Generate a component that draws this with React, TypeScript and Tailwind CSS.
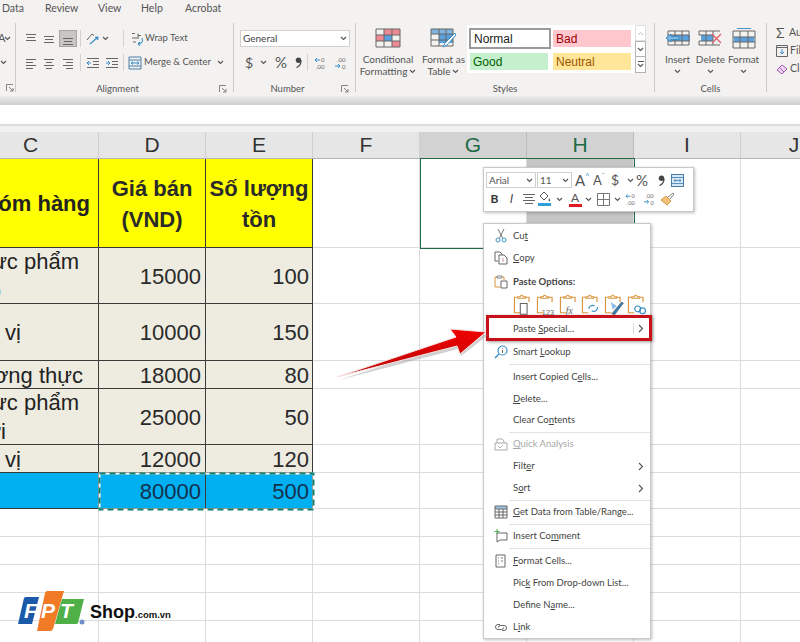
import React from 'react'

const ui = "font-['Lato',sans-serif]"
const sheet = "font-['Liberation_Sans',Arial,sans-serif]"

const Chev = ({ className = 'mx-auto' }: { className?: string }) => (
  <svg width="7" height="5" viewBox="0 0 7 5" fill="none" className={className}>
    <path d="M1 1l2.5 2.5L6 1" stroke="#555" strokeWidth="1.1" />
  </svg>
)

const Lines = ({ rows }: { rows: [number, number, number][] }) => (
  <svg width="14" height="14" viewBox="0 0 14 14" fill="none" stroke="#666" strokeWidth="1">
    {rows.map(([y, a, b]) => (
      <path key={y} d={`M${a} ${y}.5H${b}`} />
    ))}
  </svg>
)

const Launcher = () => (
  <svg width="8" height="8" viewBox="0 0 8 8" fill="none" stroke="#777" strokeWidth="0.9">
    <path d="M0.5 7V0.5H7M3 3l4 4M7 4v3H4" />
  </svg>
)

const Comma = ({ className = '' }: { className?: string }) => (
  <svg width="7" height="11" viewBox="0 0 7 11" fill="none" className={className}>
    <circle cx="3.5" cy="3.2" r="2.7" fill="#444" />
    <path d="M6 3.5C6 7 4 9.5 1.5 10.5" stroke="#444" strokeWidth="1.3" />
  </svg>
)

const DecLeft = () => (
  <svg width="14" height="14" viewBox="0 0 14 14" fill="none">
    <path d="M6 4H1m2-2L1 4l2 2" stroke="#3a8fc7" />
    <text x="7" y="6" fontSize="6" fill="#666">0</text>
    <text x="2" y="13" fontSize="6" fill="#666">.00</text>
  </svg>
)

const DecRight = () => (
  <svg width="14" height="14" viewBox="0 0 14 14" fill="none">
    <text x="3" y="6" fontSize="6" fill="#666">.00</text>
    <path d="M1 10h5M4 8l2 2-2 2" stroke="#3a8fc7" />
    <text x="8" y="13" fontSize="6" fill="#666">0</text>
  </svg>
)

const VSep = () => <div className="w-px h-[69px] bg-[#cdcbc9] shrink-0" />
const Thin = ({ h = 'h-[17px]' }: { h?: string }) => <div className={`w-px ${h} bg-[#d4d2d0] shrink-0`} />
const Box = ({ children, className = 'w-[18px]' }: { children?: React.ReactNode; className?: string }) => (
  <div className={`flex items-center justify-center h-[17px] shrink-0 ${className}`}>{children}</div>
)

const GroupLabel = ({ children, launcher }: { children?: React.ReactNode; launcher?: boolean }) => (
  <div className="flex items-center h-[12px] mt-auto mb-[1px]">
    <span className={`flex-1 text-center text-[9.5px] leading-[12px] text-[#555] ${ui}`}>{children}</span>
    {launcher && (
      <span className="w-[14px] flex">
        <Launcher />
      </span>
    )}
  </div>
)

const TableGrid = ({ fill }: { fill?: React.ReactNode }) => (
  <svg width="26" height="20" viewBox="0 0 26 20" fill="none">
    {fill}
    <path d="M1 1h24v18H1zM1 7h24M1 13h24M9 1v18M17 1v18" stroke="#666" strokeWidth="1" />
  </svg>
)

const FormatRibbonIcon = ({ top }: { top?: boolean }) => (
  <svg width="24" height="21" viewBox="0 0 24 21" fill="none">
    {top && <path d="M5 0.5h14" stroke="#4a90c8" strokeWidth="1" />}
    <rect x="2" y="9" width="20" height="5" fill="#5aa0dc" />
    <path d="M1 3h22v17H1zM1 9h22M1 14h22M8 3v17M16 3v17" stroke="#666" strokeWidth="1" />
  </svg>
)

const CmdColumn = ({ icon, lines, chev }: { icon: React.ReactNode; lines: React.ReactNode[]; chev?: boolean }) => (
  <div className={`flex flex-col items-center pt-[5px] text-[10px] leading-[12px] text-[#555] ${ui}`}>
    <div className="h-[20px] flex items-center justify-center">{icon}</div>
    <div className="mt-[5px] whitespace-nowrap text-center">{lines[0]}</div>
    {lines[1] ? (
      <div className="whitespace-nowrap flex items-center gap-[2px]">
        {lines[1]}
        <Chev className="" />
      </div>
    ) : (
      <div className="h-[12px] flex items-center">{chev && <Chev />}</div>
    )}
  </div>
)

const Ribbon = () => (
  <div className="h-[96px] bg-[#f3f2f1] flex flex-col shrink-0">
    <div className={`h-[18px] mb-[5px] flex items-center text-[10.5px] text-[#555] pl-[2px] ${ui}`}>
      <span className="w-[43px]">Data</span>
      <span className="w-[53px]">Review</span>
      <span className="w-[43px]">View</span>
      <span className="w-[44px]">Help</span>
      <span>Acrobat</span>
    </div>
    <div className="flex h-[73px] w-[800px] overflow-hidden">
      {/* font group, cut off at the left */}
      <div className="w-[15px] flex flex-col shrink-0 overflow-hidden">
        <div className={`h-[17px] mt-[7px] flex items-center text-[11px] text-[#555] -ml-[2px] ${ui}`}>
          A<Chev className="-ml-[1px]" />
        </div>
        <div className="h-[17px] mt-[7px] flex items-center">
          <Chev className="" />
        </div>
        <div className="mt-auto mb-[4px] ml-[6px]">
          <Launcher />
        </div>
      </div>
      <VSep />
      {/* Alignment */}
      <div className="w-[217px] flex flex-col shrink-0">
        <div className="flex items-center mt-[7px] pl-[6px]">
          <Box>
            <Lines rows={[[2, 2, 12], [5, 3, 11], [8, 2, 12]]} />
          </Box>
          <Box>
            <Lines rows={[[4, 2, 12], [7, 3, 11], [10, 2, 12]]} />
          </Box>
          <Box className="w-[18px] ml-px bg-[#c8c6c4] border border-[#a8a6a4]">
            <Lines rows={[[6, 2, 12], [9, 3, 11], [12, 2, 12]]} />
          </Box>
          <div className="w-[3px]" />
          <Thin />
          <Box className="w-[17px] ml-[3px]">
            <svg width="14" height="14" viewBox="0 0 14 14" fill="none">
              <path d="M1 8l5-6 2 1.5" stroke="#666" />
              <path d="M4 12l8-7M12 5l-3 .5M12 5l-.5 3" stroke="#3a8fc7" strokeWidth="1.2" />
            </svg>
          </Box>
          <Box className="w-[8px]">
            <Chev />
          </Box>
          <div className="w-[14px]" />
          <Thin />
          <Box className="w-[13px] ml-[7px]">
            <svg width="13" height="14" viewBox="0 0 13 14" fill="none">
              <path d="M1 6h7M2 10h3" stroke="#666" />
              <path d="M1 1.5h3M7 1.5v4M7 3.5h3" stroke="#666" />
              <path d="M11 6c1.5 4-1 6-4 6m0 0l2-2m-2 2l2 1.5" stroke="#3a8fc7" strokeWidth="1.1" />
            </svg>
          </Box>
          <span className={`ml-px text-[9.5px] text-[#555] whitespace-nowrap ${ui}`}>Wrap Text</span>
        </div>
        <div className="flex items-center mt-[7px] pl-[6px]">
          <Box>
            <Lines rows={[[3, 2, 12], [6, 2, 9], [9, 2, 12], [12, 2, 9]]} />
          </Box>
          <Box>
            <Lines rows={[[3, 2, 12], [6, 4, 10], [9, 2, 12], [12, 4, 10]]} />
          </Box>
          <Box className="w-[18px] ml-px">
            <Lines rows={[[3, 2, 12], [6, 5, 12], [9, 2, 12], [12, 5, 12]]} />
          </Box>
          <div className="w-[3px]" />
          <Thin />
          <Box className="w-[17px] ml-[3px]">
            <svg width="14" height="14" viewBox="0 0 14 14" fill="none">
              <path d="M1 2.5h12M7 5.5h6M7 8.5h6M1 11.5h12" stroke="#666" />
              <path d="M5 7H1m2-2L1 7l2 2" stroke="#3a8fc7" />
            </svg>
          </Box>
          <Box className="w-[17px] ml-[2px]">
            <svg width="14" height="14" viewBox="0 0 14 14" fill="none">
              <path d="M1 2.5h12M7 5.5h6M7 8.5h6M1 11.5h12" stroke="#666" />
              <path d="M1 7h4M3 5l2 2-2 2" stroke="#3a8fc7" />
            </svg>
          </Box>
          <div className="w-[3px]" />
          <Thin />
          <Box className="w-[14px] ml-[4px]">
            <svg width="14" height="14" viewBox="0 0 14 14" fill="none">
              <path d="M1 1h12v12H1zM1 4h12M1 10h12" stroke="#4a7ea8" />
              <path d="M3 7h8M3 7l2-1.5M3 7l2 1.5M11 7L9 5.5M11 7L9 8.5" stroke="#3a8fc7" />
            </svg>
          </Box>
          <span className={`ml-[2px] w-[72px] text-[9.5px] text-[#555] whitespace-nowrap ${ui}`}>Merge &amp; Center</span>
          <Chev className="ml-[1px]" />
        </div>
        <GroupLabel launcher>Alignment</GroupLabel>
      </div>
      <VSep />
      {/* Number */}
      <div className="w-[121px] flex flex-col shrink-0">
        <div className="ml-[6px] mt-[7px] w-[110px] h-[17px] bg-white border border-[#d2d0ce] flex items-center justify-between px-[2px]">
          <span className={`text-[10px] text-[#444] ${ui}`}>General</span>
          <Chev className="" />
        </div>
        <div className={`flex items-center mt-[7px] pl-[11px] h-[17px] text-[#555] ${ui}`}>
          <span className="w-[8px] text-[14px] leading-[17px]">$</span>
          <Chev className="ml-[7px]" />
          <span className="ml-[8px] text-[15px] leading-[17px] w-[17px]">%</span>
          <Comma className="ml-[3px] mr-[5px]" />
          <Thin />
          <Box className="w-[15px] ml-[5px]">
            <DecLeft />
          </Box>
          <Box className="w-[15px] ml-[5px]">
            <DecRight />
          </Box>
        </div>
        <GroupLabel launcher>Number</GroupLabel>
      </div>
      <VSep />
      {/* Styles */}
      <div className="w-[298px] flex flex-col shrink-0">
        <div className="flex h-[56px]">
          <div className="w-[64px] flex justify-center">
            <CmdColumn
              icon={
                <TableGrid
                  fill={
                    <>
                      <rect x="9" y="1" width="16" height="6" fill="#ef8a94" />
                      <rect x="1" y="7" width="8" height="6" fill="#ef8a94" />
                      <rect x="9" y="7" width="8" height="6" fill="#5aa0dc" />
                      <rect x="17" y="13" width="8" height="6" fill="#ef8a94" />
                    </>
                  }
                />
              }
              lines={['Conditional', 'Formatting']}
            />
          </div>
          <div className="w-[47px] flex justify-center">
            <CmdColumn
              icon={
                <svg width="26" height="21" viewBox="0 0 26 21" fill="none">
                  <rect x="1" y="1" width="22" height="5" fill="#7fb5e0" />
                  <rect x="9" y="6" width="14" height="9" fill="#5aa0dc" />
                  <path d="M1 1h22v17H1zM1 6h22M1 12h22M9 1v17M16 1v17" stroke="#666" />
                  <path d="M25 5L15 15l-2 4 4-2L26 7z" fill="#fff" stroke="#3a8fc7" />
                </svg>
              }
              lines={['Format as', 'Table']}
            />
          </div>
          <div className="mt-[2px] w-[179px] h-[48px] bg-white flex">
            <div className={`w-[168px] grid grid-cols-[83px_83px] grid-rows-[22px_22px] gap-y-[1px] pl-[2px] pt-[3px] text-[12px] leading-[16px] ${sheet}`}>
              <div className="w-[82px] h-[21px] border-2 border-[#9a9a9a] flex items-center px-[3px] text-[#222]">Normal</div>
              <div className="w-[78px] h-[17px] mt-[2px] ml-[1px] bg-[#ffc7ce] flex items-center px-[3px] text-[#9c0006]">Bad</div>
              <div className="w-[78px] h-[17px] mt-[2px] ml-[1px] bg-[#c6efce] flex items-center px-[3px] text-[#006100]">Good</div>
              <div className="w-[78px] h-[17px] mt-[2px] ml-[1px] bg-[#ffe699] flex items-center px-[3px] text-[#9c5700]">Neutral</div>
            </div>
            <div className="w-[11px] flex flex-col">
              <div className="h-[16px] border border-[#e1dfdd] flex items-center justify-center">
                <svg width="7" height="5" viewBox="0 0 7 5" fill="none">
                  <path d="M1 4l2.5-2.5L6 4" stroke="#bbb" />
                </svg>
              </div>
              <div className="h-[16px] border border-[#b5b3b1] flex items-center justify-center">
                <Chev className="" />
              </div>
              <div className="h-[16px] border border-[#b5b3b1] border-t-0 flex flex-col items-center justify-center">
                <div className="w-[6px] h-px bg-[#555]" />
                <Chev className="mt-[1px]" />
              </div>
            </div>
          </div>
        </div>
        <GroupLabel>Styles</GroupLabel>
      </div>
      <VSep />
      {/* Cells */}
      <div className="w-[111px] flex flex-col shrink-0">
        <div className="flex h-[56px] pl-[6px]">
          <div className="w-[33px] flex justify-center">
            <CmdColumn
              chev
              lines={['Insert']}
              icon={
                <svg width="26" height="18" viewBox="0 0 26 18" fill="none">
                  <rect x="3" y="6" width="22" height="6" fill="#5aa0dc" />
                  <path d="M3 2h21v14H3zM3 6h21M3 12h21M10 2v14M17 2v14" stroke="#666" />
                  <path d="M1 9l5-4v2.5h8v3H6V13z" fill="#7fb5e0" stroke="#3a8fc7" />
                </svg>
              }
            />
          </div>
          <div className="w-[33px] flex justify-center">
            <CmdColumn
              chev
              lines={['Delete']}
              icon={
                <svg width="25" height="18" viewBox="0 0 25 18" fill="none">
                  <rect x="3" y="6" width="12" height="6" fill="#5aa0dc" />
                  <path d="M1 2h21M1 16h21M8 2v14M15 2v14M1 6h13M1 12h13M1 2v4M1 12v4" stroke="#666" />
                  <path d="M14 5l9 9M23 5l-9 9" stroke="#e2606a" strokeWidth="1.4" />
                </svg>
              }
            />
          </div>
          <div className="w-[33px] flex justify-center">
            <CmdColumn chev lines={['Format']} icon={<FormatRibbonIcon top />} />
          </div>
        </div>
        <GroupLabel>Cells</GroupLabel>
      </div>
      <VSep />
      {/* Editing, cut off at the right */}
      <div className={`pl-[9px] pt-[1px] flex flex-col shrink-0 text-[10.5px] leading-[17px] text-[#555] whitespace-nowrap ${ui}`}>
        <div className="flex items-center h-[17px] gap-[2px]">
          <span className="text-[14px] w-[11px] leading-[17px]">Σ</span>AutoSum
        </div>
        <div className="flex items-center h-[17px] mt-[1px] gap-[2px]">
          <svg width="12" height="12" viewBox="0 0 12 12" fill="none">
            <path d="M0.5 0.5h11v11H0.5zM0.5 2.5h11" stroke="#666" />
            <path d="M6 4v5M4 7l2 2 2-2" stroke="#3a8fc7" />
          </svg>
          Fill
        </div>
        <div className="flex items-center h-[17px] mt-[1px] gap-[2px]">
          <svg width="12" height="12" viewBox="0 0 12 12" fill="none">
            <path d="M1 7l5-5 5 4-5 5z" fill="#efd8f2" stroke="#a855b5" />
            <path d="M3.5 4.5L8 9" stroke="#a855b5" />
          </svg>
          Clear
        </div>
      </div>
    </div>
  </div>
)

const cols = ['C', 'D', 'E', 'F', 'G', 'H', 'I', 'J']

const Line = ({ t, pr }: { t: string; pr: string }) => (
  <div className={`whitespace-nowrap leading-[29px] ${pr}`}>{t}</div>
)

const cText = [
  <div className="font-bold whitespace-nowrap pr-[8px]">Nhóm hàng</div>,
  <>
    <Line t="Thực phẩm" pr="pr-[19px]" />
    <Line t="khô" pr="pr-[97px]" />
  </>,
  <Line t="Gia vị" pr="pr-[77px]" />,
  <Line t="Lương thực" pr="pr-[15px]" />,
  <>
    <Line t="Thực phẩm" pr="pr-[19px]" />
    <Line t="tươi" pr="pr-[92px]" />
  </>,
  <Line t="Gia vị" pr="pr-[77px]" />,
  null
]

const nums: [string, string][] = [
  ['15000', '100'],
  ['10000', '150'],
  ['18000', '80'],
  ['25000', '50'],
  ['12000', '120'],
  ['80000', '500']
]

const Sheet = () => (
  <div className={`relative flex-1 ${sheet}`}>
    <div className="grid grid-cols-[99px_107px_107px_107px_107px_107px_107px_107px] h-[27px] w-[848px] bg-[#e6e6e6] border-b border-[#b5b5b5] text-[21px] leading-[26px] text-[#333]">
      {cols.map((c) => {
        const sel = c === 'G' || c === 'H'
        return (
          <div
            key={c}
            className={`text-center border-r ${sel ? 'bg-[#d2d2d2] text-[#1e6b45] border-[#bdbdbd]' : 'border-[#cfcfcf]'} ${c === 'C' ? 'pr-[37px]' : ''}`}
          >
            {c}
          </div>
        )
      })}
    </div>
    <div className="grid grid-cols-[99px_107px_107px_107px_107px_107px_107px_107px] grid-rows-[89px_56px_57px_28px_56px_28px_36px_28px_28px_28px_28px_28px] w-[848px] text-[22px] text-[#222]">
      {Array.from({ length: 12 }).map((_, r) => {
        const head = r === 0
        const table = r <= 6
        const blue = r === 6
        const bg = head ? 'bg-[#ffff00]' : blue ? 'bg-[#00b0f0]' : table ? 'bg-[#eeece1]' : 'bg-white'
        const line = table ? 'border-[#3a3a3a]' : 'border-[#dcdcdc]'
        const num = r >= 1 && r <= 6 ? nums[r - 1] : null
        const numColor = blue ? 'text-[#14304e]' : 'text-[#2a2a2a]'
        return (
          <React.Fragment key={r}>
            <div className={`${bg} border-r border-b ${line} overflow-hidden flex flex-col justify-center items-end pt-[1px]`}>
              {cText[r]}
            </div>
            <div className={`${bg} border-r border-b ${line} flex flex-col justify-center pt-[1px] ${head ? 'items-center font-bold leading-[31px]' : 'items-end pr-[4px]'} ${numColor}`}>
              {head ? (
                <>
                  <div>Giá bán</div>
                  <div>(VND)</div>
                </>
              ) : (
                num && num[0]
              )}
            </div>
            <div className={`${bg} border-r border-b ${line} flex flex-col justify-center pt-[1px] ${head ? 'items-center font-bold leading-[31px]' : 'items-end pr-[3px]'} ${numColor}`}>
              {head ? (
                <>
                  <div>Số lượng</div>
                  <div>tồn</div>
                </>
              ) : (
                num && num[1]
              )}
            </div>
            <div className="border-r border-b border-[#dcdcdc]" />
            <div className="border-r border-b border-[#dcdcdc]" />
            <div className={`border-r border-b border-[#dcdcdc] ${head ? 'bg-[#c6c6c6]' : ''}`} />
            <div className="border-r border-b border-[#dcdcdc]" />
            <div className="border-r border-b border-[#dcdcdc]" />
          </React.Fragment>
        )
      })}
    </div>

    {/* selection box over G:H */}
    <div className="absolute left-[420px] top-[26px] w-[215px] h-[91px] border-[1.5px] border-[#1e6b45]" />
    {/* copied range marching ants */}
    <svg className="absolute left-[98px] top-[340px]" width="217" height="39" viewBox="0 0 217 39" fill="none">
      <rect x="1.5" y="1.5" width="214" height="36" stroke="#fff" strokeWidth="2" />
      <rect x="1.5" y="1.5" width="214" height="36" stroke="#12806e" strokeWidth="2" strokeDasharray="6 4" />
    </svg>
  </div>
)

const Clip = ({ children }: { children?: React.ReactNode }) => (
  <svg width="24" height="22" viewBox="0 0 24 22" fill="none" className="-mr-[0.5px]">
    <path d="M5 3H1.5v16h6M13 3h3.5v5" stroke="#d9963f" strokeWidth="1.2" />
    <path d="M5 4V2.5h2.5a1.5 1.5 0 013 0H13V4z" stroke="#d9963f" strokeWidth="1.1" />
    {children}
  </svg>
)

const MiniToolbar = () => (
  <div className="absolute left-[483px] top-[167px] w-[211px] h-[45px] bg-white border border-[#c8c8c8] shadow-[1px_1px_3px_rgba(0,0,0,0.25)] flex flex-col text-[#555]">
    <div className={`flex items-center h-[16px] mt-[4px] ml-[2px] ${ui}`}>
      <div className="w-[50px] h-[16px] border border-[#cfcfcf] flex items-center justify-between px-[2px] text-[10px]">
        Arial
        <Chev className="" />
      </div>
      <div className="w-[35px] h-[16px] ml-px border border-[#cfcfcf] flex items-center justify-between px-[2px] text-[10px]">
        11
        <Chev className="" />
      </div>
      <span className="ml-[3px] text-[15px] leading-[16px] w-[18px] flex">
        A<span className="text-[7px] leading-[8px] text-[#3a8fc7]">^</span>
      </span>
      <span className="text-[13px] leading-[16px] w-[18px] flex">
        A<span className="text-[7px] leading-[8px] text-[#3a8fc7]">ˇ</span>
      </span>
      <span className="text-[14px] leading-[16px] w-[10px]">$</span>
      <Chev className="ml-[6px]" />
      <span className="ml-[2px] text-[15px] leading-[16px] w-[17px]">%</span>
      <Comma className="ml-[5px] mr-[6px]" />
      <svg width="13" height="13" viewBox="0 0 13 13" fill="none">
        <rect x="0.5" y="0.5" width="12" height="12" fill="#d6e6f3" stroke="#4a7ea8" />
        <path d="M0.5 3.5h12M0.5 9.5h12M3 6.5h7M3 6.5l1.5-1M3 6.5l1.5 1M10 6.5l-1.5-1M10 6.5l-1.5 1" stroke="#3a7fb0" strokeWidth="0.8" />
      </svg>
    </div>
    <div className={`flex items-center h-[18px] mt-[2px] ml-[2px] ${ui}`}>
      <span className="w-[17px] text-center font-bold text-[12px] text-[#333]">B</span>
      <span className={`w-[17px] text-center italic text-[12px] text-[#444] ${sheet}`}>I</span>
      <span className="w-[17px] flex justify-center">
        <Lines rows={[[2, 1, 13], [5, 3, 11], [8, 1, 13], [11, 3, 11]]} />
      </span>
      <svg width="14" height="16" viewBox="0 0 14 16" fill="none" className="ml-[1px]">
        <path d="M6 1l4 4-4 4-4-4z" stroke="#555" />
        <path d="M11 7c1 1.5 1.5 2 1 3-.5.5-1.5.5-1.5-.5z" fill="#555" />
        <rect x="0" y="12" width="13" height="3" fill="#2f9fd8" />
      </svg>
      <Chev className="ml-[4px]" />
      <span className="ml-[6px] w-[12px] flex flex-col items-center">
        <span className="text-[12px] leading-[12px] text-[#555]">A</span>
        <span className="w-[13px] h-[3px] bg-[#e01b24]" />
      </span>
      <Chev className="ml-[4px]" />
      <svg width="13" height="13" viewBox="0 0 13 13" fill="none" className="ml-[5px]">
        <path d="M0.5 0.5h12v12H0.5zM0.5 6.5h12M6.5 0.5v12" stroke="#777" />
      </svg>
      <Chev className="ml-[4px]" />
      <Box className="w-[13px] ml-[4px]">
        <DecLeft />
      </Box>
      <Box className="w-[13px] ml-[5px]">
        <DecRight />
      </Box>
      <svg width="15" height="14" viewBox="0 0 15 14" fill="none" className="ml-[4px]">
        <path d="M1 8l5-4 5 5-4 4z" fill="#f2c078" stroke="#d9963f" />
        <path d="M8 5l5-4 1 1-4 5" stroke="#888" />
      </svg>
    </div>
  </div>
)

const MenuRow = ({
  icon,
  children,
  arrow,
  disabled,
  bold
}: {
  icon?: React.ReactNode
  children: React.ReactNode
  arrow?: boolean
  disabled?: boolean
  bold?: boolean
}) => (
  <div className={`h-[22px] flex items-center ${disabled ? 'text-[#a8a8a8]' : 'text-[#444]'} ${bold ? 'font-bold' : ''}`}>
    <div className="w-[29px] flex justify-center pl-[4px]">{icon}</div>
    <div className="flex-1 whitespace-nowrap">{children}</div>
    {arrow && (
      <svg width="6" height="9" viewBox="0 0 6 9" fill="none" className="mr-[6px]">
        <path d="M1 1l3.5 3.5L1 8" stroke="#555" strokeWidth="1.1" />
      </svg>
    )}
  </div>
)

const MenuSep = ({ h = 'h-[2px]' }: { h?: string }) => (
  <div className={`${h} pl-[25px] flex items-center`}>
    <div className="h-px w-full bg-[#e2e2e2]" />
  </div>
)

const ContextMenu = () => (
  <div className={`absolute left-[483px] top-[223px] w-[168px] h-[416px] bg-white border border-[#c8c8c8] shadow-[1px_1px_3px_rgba(0,0,0,0.25)] flex flex-col pt-[1px] text-[9.5px] ${ui}`}>
    <MenuRow
      icon={
        <svg width="12" height="15" viewBox="0 0 12 15" fill="none">
          <path d="M3 1l4.5 9M9 1L4.5 10" stroke="#777" />
          <circle cx="3" cy="12" r="2" stroke="#3a8fc7" />
          <circle cx="9" cy="12" r="2" stroke="#3a8fc7" />
        </svg>
      }
    >
      Cu<u>t</u>
    </MenuRow>
    <MenuRow
      icon={
        <svg width="14" height="14" viewBox="0 0 14 14" fill="none">
          <path d="M1 1h5l2 2v1M1 1v9h3" stroke="#666" />
          <path d="M5 4h5l3 3v6H5z" stroke="#666" />
          <path d="M8 8h2M8 10h2" stroke="#c99" />
        </svg>
      }
    >
      <u>C</u>opy
    </MenuRow>
    <div className="h-[2px]" />
    <MenuRow
      bold
      icon={
        <svg width="14" height="14" viewBox="0 0 14 14" fill="none">
          <path d="M3 2H1v10h5M8 2h2v3" stroke="#d9963f" />
          <path d="M3 3V1h5v2z" stroke="#888" />
          <path d="M7 6h6v7H7z" stroke="#666" />
        </svg>
      }
    >
      Paste Options:
    </MenuRow>
    <div className="h-[25px] flex items-center pl-[29px]">
      <Clip>
        <path d="M9.5 9.5h5v11h-7v-11z" fill="#fff" stroke="#666" strokeWidth="1.1" />
      </Clip>
      <Clip>
        <text x="6" y="21" fontSize="7.5" fill="#666" fontFamily="'Liberation Sans',sans-serif">123</text>
      </Clip>
      <Clip>
        <text x="7" y="20" fontSize="10" fontStyle="italic" fill="#666" fontFamily="'Liberation Serif',serif">fx</text>
      </Clip>
      <Clip>
        <path d="M8 15a4 4 0 016-3m3 1a4 4 0 01-6 4" stroke="#3a8fc7" strokeWidth="1.2" />
      </Clip>
      <Clip>
        <path d="M7 8l6 4-4 4z" fill="#8fbde3" />
        <path d="M8 20l10-12 2 1-9 12z" fill="#3a7fb0" stroke="#555" strokeWidth="0.6" />
      </Clip>
      <Clip>
        <circle cx="11" cy="15" r="3" stroke="#3a8fc7" strokeWidth="1.2" />
        <circle cx="16" cy="17" r="3" stroke="#3a8fc7" strokeWidth="1.2" />
      </Clip>
    </div>
    <MenuRow arrow>
      <div className="flex items-center">
        <span className="flex-1">
          Paste <u>S</u>pecial...
        </span>
        <span className="w-px h-[11px] bg-[#ddd] mr-[4px]" />
      </div>
    </MenuRow>
    <div className="h-px" />
    <MenuRow
      icon={
        <svg width="14" height="14" viewBox="0 0 14 14" fill="none">
          <circle cx="8.5" cy="5.5" r="4.5" stroke="#3a8fc7" strokeWidth="1.2" />
          <path d="M5 9l-4 4" stroke="#3a8fc7" strokeWidth="1.5" />
          <path d="M8.5 3v.8M8.5 5v3" stroke="#666" />
        </svg>
      }
    >
      Smart <u>L</u>ookup
    </MenuRow>
    <MenuSep h="h-[3px]" />
    <MenuRow>
      Insert Copied C<u>e</u>lls...
    </MenuRow>
    <MenuRow>
      <u>D</u>elete...
    </MenuRow>
    <MenuRow>
      Clear Co<u>n</u>tents
    </MenuRow>
    <MenuSep />
    <MenuRow
      disabled
      icon={
        <svg width="14" height="13" viewBox="0 0 14 13" fill="none">
          <path d="M1 5h12v7H1zM3 5V1h5l2 2v2" stroke="#aaa" />
          <path d="M4 8l2 2 3-3" stroke="#bbb" />
        </svg>
      }
    >
      <u>Q</u>uick Analysis
    </MenuRow>
    <MenuRow arrow>
      Filt<u>e</u>r
    </MenuRow>
    <MenuRow arrow>
      S<u>o</u>rt
    </MenuRow>
    <MenuSep />
    <MenuRow
      icon={
        <svg width="14" height="14" viewBox="0 0 14 14" fill="none">
          <rect x="1" y="1" width="12" height="3" fill="#9cc7e6" />
          <path d="M1 1h12v12H1zM1 4h12M1 7h12M1 10h12M5 4v9M9 4v9" stroke="#666" />
        </svg>
      }
    >
      <u>G</u>et Data from Table/Range...
    </MenuRow>
    <MenuSep />
    <MenuRow
      icon={
        <svg width="14" height="14" viewBox="0 0 14 14" fill="none">
          <path d="M3 4h10v7H6l-3 2z" stroke="#666" />
          <path d="M3 0v5M0.5 2.5h5" stroke="#4caf50" />
        </svg>
      }
    >
      Insert Co<u>m</u>ment
    </MenuRow>
    <MenuSep h="h-[3px]" />
    <MenuRow
      icon={
        <svg width="11" height="14" viewBox="0 0 11 14" fill="none">
          <path d="M1 1h9v12H1z" stroke="#666" />
          <path d="M3 4h1M6 4h2M3 7h1M6 7h2M3 10h1" stroke="#777" />
        </svg>
      }
    >
      <u>F</u>ormat Cells...
    </MenuRow>
    <MenuRow>
      Pic<u>k</u> From Drop-down List...
    </MenuRow>
    <MenuRow>
      Define N<u>a</u>me...
    </MenuRow>
    <MenuRow
      icon={
        <svg width="14" height="11" viewBox="0 0 14 11" fill="none">
          <path d="M6 2.5H4a2.5 2.5 0 000 5h3.5a2 2 0 002-2" stroke="#666" />
          <path d="M8 8.5h2a2.5 2.5 0 000-5H6.5a2 2 0 00-2 2" stroke="#666" />
        </svg>
      }
    >
      L<u>i</u>nk
    </MenuRow>
  </div>
)

const Logo = () => (
  <div className="absolute left-[18px] top-[591px] flex items-center">
    <svg width="68" height="41" viewBox="0 0 68 41" fill="none">
      <path d="M6 7a3 3 0 013-1h12L14 33H0z" fill="#1a5aa8" />
      <path d="M27 2a3 3 0 013-2h16L35 38a3 3 0 01-3 2H19z" fill="#f07a25" />
      <path d="M44 8h22l-6 24a2 2 0 01-2 1H37z" fill="#4fb048" />
      <text x="6" y="27" fontFamily="'Liberation Sans',sans-serif" fontWeight="700" fontStyle="italic" fontSize="21" fill="#fff">F</text>
      <text x="23" y="27" fontFamily="'Liberation Sans',sans-serif" fontWeight="700" fontStyle="italic" fontSize="21" fill="#fff">P</text>
      <text x="42" y="27" fontFamily="'Liberation Sans',sans-serif" fontWeight="700" fontStyle="italic" fontSize="21" fill="#fff">T</text>
      <circle cx="64" cy="31" r="2.5" fill="#6f8fc8" />
    </svg>
    <span className={`ml-[4px] mt-[4px] text-[#111] font-bold text-[18px] leading-[20px] ${sheet}`}>
      Shop<span className="text-[9.5px]">.com.vn</span>
    </span>
  </div>
)

export default function App() {
  return (
    <div className="relative w-[800px] h-[642px] overflow-hidden bg-white flex flex-col">
      <Ribbon />
      {/* shadow under the ribbon */}
      <div className="h-[9px] bg-gradient-to-b from-[#ececeb] to-[#cfcfcf] shrink-0" />
      {/* formula bar */}
      <div className="h-[19px] bg-white shrink-0" />
      <div className="h-[8px] bg-[#f1f1f1] border-t-2 border-[#dcdcdc] shrink-0" />
      <Sheet />

      <MiniToolbar />
      <ContextMenu />

      {/* red highlight and arrow */}
      <div className="absolute left-[486px] top-[315px] w-[166px] h-[26px] border-[3px] border-[#c8101a] shadow-[1px_1px_3px_rgba(0,0,0,0.4)]" />
      <svg className="absolute left-[330px] top-[322px]" width="160" height="62" viewBox="330 322 160 62" fill="none">
        <defs>
          <linearGradient id="arrowFill" x1="0" y1="0" x2="0" y2="1">
            <stop offset="0" stopColor="#f00000" />
            <stop offset="1" stopColor="#b80a0a" />
          </linearGradient>
        </defs>
        <path d="M339 380L458 349L461 356L488 335L453 332L459 341Z" fill="#999" opacity="0.45" />
        <path
          d="M337 377L456 337L450 329L486 332L460 354L457 346Z"
          fill="url(#arrowFill)"
          stroke="#f7e3e3"
          strokeWidth="1"
        />
      </svg>

      <Logo />
    </div>
  )
}
